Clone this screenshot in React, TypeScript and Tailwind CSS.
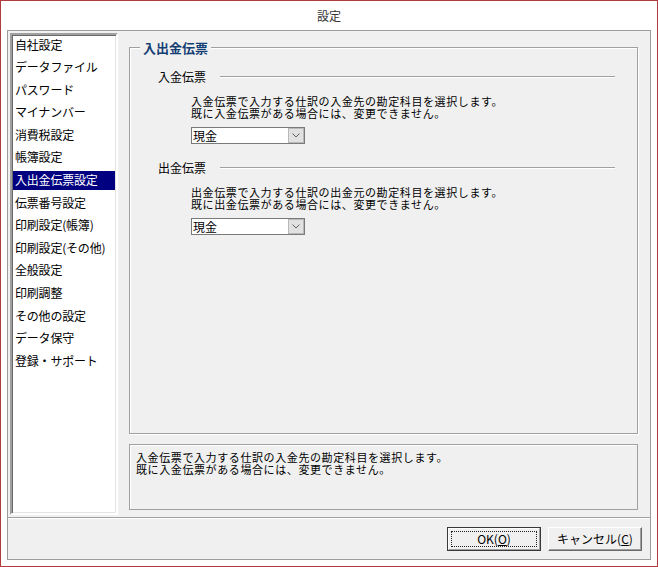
import React from "react";

const menuItems = [
  "自社設定",
  "データファイル",
  "パスワード",
  "マイナンバー",
  "消費税設定",
  "帳簿設定",
  "入出金伝票設定",
  "伝票番号設定",
  "印刷設定(帳簿)",
  "印刷設定(その他)",
  "全般設定",
  "印刷調整",
  "その他の設定",
  "データ保守",
  "登録・サポート",
];

function ComboBox({ value }: { value: string }) {
  return (
    <div className="w-[114px] h-[17px] border border-[#7a7a7a] bg-white flex items-stretch">
      <div className="flex-1 pl-[1px] text-[12px] leading-[15px]">{value}</div>
      <div className="w-[16px] bg-[#e1e1e1] border border-[#b8b8b8] flex items-center justify-center">
        <svg width="8" height="5" viewBox="0 0 8 5">
          <polyline points="0.5,0.5 4,4 7.5,0.5" fill="none" stroke="#606060" strokeWidth="1" />
        </svg>
      </div>
    </div>
  );
}

function Section({ title, lines, first }: { title: string; lines: string[]; first?: boolean }) {
  return (
    <div className={first ? "" : "mt-[17px]"}>
      <div className="h-[14px] pl-[28px] mr-[22px] flex items-center">
        <span className="text-[12px] leading-[14px]">{title}</span>
        <div className="flex-1 ml-[14px] border-t border-[#a0a0a0] border-b border-b-white" />
      </div>
      <div className="pl-[61px] mt-[11px]">
        <div className="text-[11px] leading-[12px] tracking-[0.6px] whitespace-nowrap">
          {lines.map((l) => (
            <div key={l}>{l}</div>
          ))}
        </div>
        <div className="mt-[8px]">
          <ComboBox value="現金" />
        </div>
      </div>
    </div>
  );
}

export default function App() {
  return (
    <div className="w-[658px] h-[567px] bg-white border border-[#b23b3b] flex flex-col text-black font-['Noto_Sans_CJK_JP','Liberation_Sans',sans-serif]">
      <div className="h-[29px] shrink-0 flex items-center justify-center text-[12px] text-[#333]">設定</div>

      <div className="mx-[6px] mb-[6px] flex-1 border border-[#9c9c9c] bg-[#f0f0f0] flex flex-col">
        <div className="h-[486px] shrink-0 flex">
          {/* left list */}
          <div className="ml-[2px] mt-[2px] w-[108px] h-[482px] bg-white border-2 border-t-[#a0a0a0] border-l-[#a0a0a0] border-r-white border-b-white shadow-[inset_1px_1px_0_#696969,inset_-1px_-1px_0_#e3e3e3] flex flex-col gap-[3.6px] pl-[1px] pr-[1px]">
            {menuItems.map((item, i) => (
              <div
                key={item}
                className={`h-[19px] shrink-0 pl-[2px] flex items-center text-[12px] whitespace-nowrap tracking-[-0.2px] ${
                  i === 6 ? "bg-[#000080] text-white" : ""
                }`}
              >
                {item}
              </div>
            ))}
          </div>

          {/* right panel */}
          <div className="flex-1 ml-[11px] mr-[12px] pt-[16px] flex flex-col">
            <div className="relative h-[387px] border border-[#a0a0a0] shadow-[inset_1px_1px_0_#fff,1px_1px_0_#fff] pt-[22px]">
              <div className="absolute -top-[8px] left-[10px] px-[3px] bg-[#f0f0f0] text-[13px] leading-[15px] font-bold text-[#153e75]">
                入出金伝票
              </div>
              <Section
                first
                title="入金伝票"
                lines={[
                  "入金伝票で入力する仕訳の入金先の勘定科目を選択します。",
                  "既に入金伝票がある場合には、変更できません。",
                ]}
              />
              <Section
                title="出金伝票"
                lines={[
                  "出金伝票で入力する仕訳の出金元の勘定科目を選択します。",
                  "既に出金伝票がある場合には、変更できません。",
                ]}
              />
            </div>

            <div className="mt-[10px] h-[66px] border border-[#a0a0a0] shadow-[inset_1px_1px_0_#fff] pl-[6px] pt-[6px] text-[11px] leading-[12px] tracking-[0.6px] whitespace-nowrap">
              <div>入金伝票で入力する仕訳の入金先の勘定科目を選択します。</div>
              <div>既に入金伝票がある場合には、変更できません。</div>
            </div>
          </div>
        </div>

        {/* buttons */}
        <div className="flex-1 border-t border-[#a0a0a0] shadow-[inset_0_1px_0_#fff] flex justify-end items-start pt-[9px] pr-[8px] gap-[7px]">
          <button className="w-[94px] h-[24px] border border-[#3a3a3a] bg-[#f0f0f0] p-0">
            <div className="w-full h-full border border-t-white border-l-white border-r-[#a0a0a0] border-b-[#a0a0a0] p-[2px]">
              <div className="w-full h-full border border-dotted border-[#222] flex items-center justify-center text-[12px] leading-[12px]">
                OK(<span className="underline">O</span>)
              </div>
            </div>
          </button>
          <button className="w-[94px] h-[24px] border border-t-white border-l-white border-r-[#696969] border-b-[#696969] shadow-[inset_-1px_-1px_0_#a0a0a0] bg-[#f0f0f0] flex items-center justify-center text-[12px] leading-[12px]">
            キャンセル(<span className="underline">C</span>)
          </button>
        </div>
      </div>
    </div>
  );
}
